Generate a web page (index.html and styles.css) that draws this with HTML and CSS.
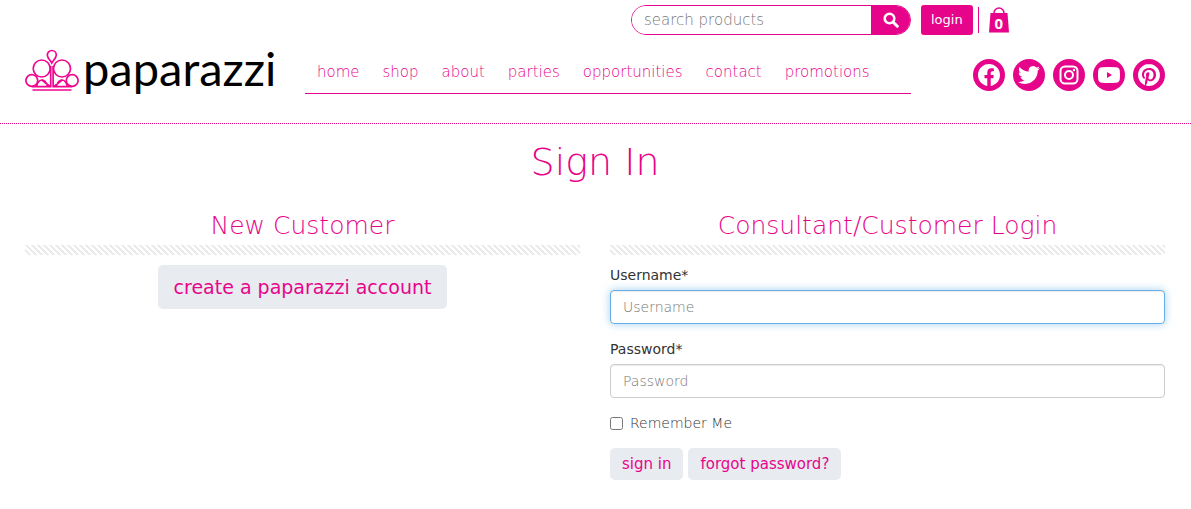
FILE: index.html
```html
<!DOCTYPE html>
<html lang="en">
<head>
	<meta charset="utf-8">
	<title>Sign In</title>
	<meta name="viewport" content="width=device-width, initial-scale=1">
	<link rel="stylesheet" href="styles.css">
</head>
<body>
	<header class="site-header">
		<div class="container header-grid">
			<div class="main-col search-row">
				<form class="search">
					<input type="text" placeholder="search products" aria-label="search products">
					<button type="submit" aria-label="search">
						<svg width="16" height="16" viewBox="0 0 16 16"><circle cx="6.5" cy="6.5" r="4.8" fill="none" stroke="#fff" stroke-width="2.6"/><path d="M10 10l4.3 4.3" stroke="#fff" stroke-width="3" stroke-linecap="round"/></svg>
					</button>
				</form>
			</div>
			<div class="side-col account">
				<button class="login" type="button">login</button>
				<a class="bag" href="#">
					<svg width="20" height="26" viewBox="0 0 20 26"><path d="M5 8V6a5 5 0 0 1 10 0V8" fill="none" stroke="#e6058a" stroke-width="1.5"/><path d="M1.500 6h17L20 25.500H0z" fill="#e6058a"/></svg>
					<span class="bag-count">0</span>
				</a>
			</div>
			<a class="logo" href="#">
				<svg width="54" height="44" viewBox="0 0 54 44" fill="none" stroke="#f1078f" stroke-width="1.7">
					<path d="M26.800 15C25 12 22.300 9.800 22.300 7a4.500 4.500 0 0 1 9 0C31.300 9.800 28.600 12 26.800 15z"/>
					<circle cx="16.700" cy="20.500" r="8.500"/>
					<circle cx="37" cy="20.500" r="8.500"/>
					<circle cx="6.800" cy="32.500" r="5.900"/>
					<circle cx="47.200" cy="32.500" r="5.900"/>
					<path d="M6.800 38.700H25.700V18"/>
					<path d="M47.200 38.700H28.100V18"/>
					<path d="M11.500 38.500c1-4 3-6.500 5.500-6.500s4.500 2.500 5.500 6.500M31.400 38.500c1-4 3-6.500 5.500-6.500s4.500 2.500 5.500 6.500M17 32l8 6.500M37 32l-8 6.500"/>
					<path d="M7.500 42h39"/>
				</svg>
				<span class="logo-text">paparazzi</span>
			</a>
			<nav class="main-col main-nav">
				<a href="#">home</a>
				<a href="#">shop</a>
				<a href="#">about</a>
				<a href="#">parties</a>
				<a href="#">opportunities</a>
				<a href="#">contact</a>
				<a href="#">promotions</a>
			</nav>
			<div class="side-col social">
				<a href="#" aria-label="Facebook"><svg width="22" height="22" viewBox="0 0 24 24"><path d="M24 12.073c0-6.627-5.373-12-12-12s-12 5.373-12 12c0 5.990 4.388 10.954 10.125 11.854v-8.385H7.078v-3.470h3.047V9.430c0-3.007 1.792-4.669 4.533-4.669 1.312 0 2.686.235 2.686.235v2.953H15.830c-1.491 0-1.956.925-1.956 1.874v2.250h3.328l-.532 3.470h-2.796v8.385C19.612 23.027 24 18.062 24 12.073z"/></svg></a>
				<a href="#" aria-label="Twitter"><svg width="22" height="22" viewBox="0 0 24 24"><path d="M23.953 4.570a10 10 0 01-2.825.775 4.958 4.958 0 002.163-2.723c-.951.555-2.005.959-3.127 1.184a4.920 4.920 0 00-8.384 4.482C7.690 8.095 4.067 6.130 1.640 3.162a4.822 4.822 0 00-.666 2.475c0 1.710.870 3.213 2.188 4.096a4.904 4.904 0 01-2.228-.616v.060a4.923 4.923 0 003.946 4.827 4.996 4.996 0 01-2.212.085 4.936 4.936 0 004.604 3.417 9.867 9.867 0 01-6.102 2.105c-.390 0-.779-.023-1.170-.067a13.995 13.995 0 007.557 2.209c9.053 0 13.998-7.496 13.998-13.985 0-.210 0-.420-.015-.630A9.935 9.935 0 0024 4.590z"/></svg></a>
				<a href="#" aria-label="Instagram"><svg width="20" height="20" viewBox="0 0 20 20"><rect x="1.500" y="1.500" width="17" height="17" rx="4.500" fill="none" stroke="#fff" stroke-width="2"/><circle cx="10" cy="10" r="4" fill="none" stroke="#fff" stroke-width="2"/><circle cx="15" cy="5" r="1.200"/></svg></a>
				<a href="#" aria-label="YouTube"><svg width="22" height="16" viewBox="0 0 22 16"><path fill-rule="evenodd" d="M4 .3Q11-.3 18 .3Q21.500.3 21.800 4Q22.200 8 21.800 12Q21.500 15.700 18 15.700Q11 16.300 4 15.700Q.5 15.700.2 12Q-.2 8 .2 4Q.5.3 4 .3zM9 5v6l5-3z"/></svg></a>
				<a href="#" aria-label="Pinterest"><svg width="22" height="22" viewBox="0 0 24 24"><path d="M12.017 0C5.396 0 .029 5.367.029 11.987c0 5.079 3.158 9.417 7.618 11.162-.105-.949-.199-2.403.041-3.439.219-.937 1.406-5.957 1.406-5.957s-.359-.720-.359-1.781c0-1.663.967-2.911 2.168-2.911 1.024 0 1.518.769 1.518 1.688 0 1.029-.653 2.567-.992 3.992-.285 1.193.600 2.165 1.775 2.165 2.128 0 3.768-2.245 3.768-5.487 0-2.861-2.063-4.869-5.008-4.869-3.410 0-5.409 2.562-5.409 5.199 0 1.033.394 2.143.889 2.741.099.120.112.225.085.345-.090.375-.293 1.199-.334 1.363-.053.225-.172.271-.401.165-1.495-.690-2.433-2.878-2.433-4.646 0-3.776 2.748-7.252 7.920-7.252 4.158 0 7.392 2.967 7.392 6.923 0 4.135-2.607 7.462-6.233 7.462-1.214 0-2.354-.629-2.758-1.379l-.749 2.848c-.269 1.045-1.004 2.352-1.498 3.146 1.123.345 2.306.535 3.550.535 6.607 0 11.985-5.365 11.985-11.987C23.970 5.390 18.592.026 11.985.026L12.017 0z"/></svg></a>
			</div>
		</div>
	</header>
	<main class="container">
		<h1>Sign In</h1>
		<div class="columns">
			<section class="new-customer">
				<h2>New Customer</h2>
				<div class="stripes"></div>
				<button class="btn btn-lg" type="button">create a paparazzi account</button>
			</section>
			<section>
				<h2>Consultant/Customer Login</h2>
				<div class="stripes"></div>
				<form class="login-form">
					<div class="form-group">
						<label for="username">Username*</label>
						<input class="form-control" type="text" id="username" placeholder="Username" autofocus>
					</div>
					<div class="form-group">
						<label for="password">Password*</label>
						<input class="form-control" type="password" id="password" placeholder="Password">
					</div>
					<label class="remember"><input type="checkbox"> Remember Me</label>
					<div class="buttons">
						<button class="btn" type="submit">sign in</button>
						<button class="btn" type="button">forgot password?</button>
					</div>
				</form>
			</section>
		</div>
	</main>
</body>
</html>
```
FILE: styles.css
```css
* {
	box-sizing: border-box;
}
body {
	margin: 0;
	font-family: "DejaVu Sans", sans-serif;
	font-weight: 200;
	font-size: 14px;
	line-height: 20px;
	color: #333;
	background: #fff;
}
input, button {
	font: inherit;
}
a {
	color: #e6058a;
	text-decoration: none;
}
.container {
	padding: 0 26px 0 25px;
}

/* header */
.site-header {
	border-bottom: 1px dotted #e6058a;
}
.header-grid {
	display: grid;
	grid-template-columns: 250px 1fr 254px;
	padding-top: 5px;
	padding-bottom: 29px;
}
.main-col {
	grid-column: 2;
	margin-left: 30px;
}
.side-col {
	grid-column: 3;
	padding-left: 10px;
}
.search-row {
	display: flex;
	justify-content: flex-end;
}
.search {
	display: flex;
	width: 280px;
	height: 30px;
	border: 1px solid #e6058a;
	border-radius: 15px;
	overflow: hidden;
}
.search input {
	flex: 1;
	min-width: 0;
	padding: 0 12px;
	border: 0;
	outline: 0;
	font-size: 15px;
}
.search button {
	width: 39px;
	padding: 0;
	border: 0;
	background: #e6058a;
}
.search svg {
	display: block;
	margin: 0 auto;
}
input::placeholder {
	color: #777;
	opacity: 1;
}
.account {
	display: flex;
	align-items: center;
}
.login {
	height: 30px;
	padding: 0 10px;
	border: 0;
	border-radius: 3px;
	font-size: 13px;
	font-weight: 400;
	color: #fff;
	background: #e6058a;
}
.bag {
	position: relative;
	margin-left: 5px;
	padding-left: 10px;
	height: 26px;
	border-left: 1px solid #e6058a;
}
.bag-count {
	position: absolute;
	left: 10px;
	bottom: 0;
	width: 20px;
	text-align: center;
	font-family: "Open Sans", sans-serif;
	font-size: 15px;
	font-weight: 700;
	color: #fff;
}
.logo {
	display: flex;
	grid-column: 1;
	height: 59px;
	padding-top: 13px;
}
.logo svg {
	flex: none;
}
.logo-text {
	margin-left: 4px;
	font-family: Lato, sans-serif;
	font-size: 47px;
	line-height: 40px;
	font-weight: 400;
	color: #000;
}
.main-nav {
	display: flex;
	align-items: flex-end;
	gap: 23px;
	padding: 0 12px 11px;
	border-bottom: 1px solid #e6058a;
	font-size: 15px;
}
.social {
	display: flex;
	justify-content: flex-end;
	align-items: flex-end;
	gap: 8px;
	padding-bottom: 3px;
}
.social a {
	display: flex;
	align-items: center;
	justify-content: center;
	width: 32px;
	height: 32px;
	border-radius: 50%;
	background: #e6058a;
}
.social svg {
	fill: #fff;
}

/* sign in */
h1, h2 {
	margin: 0;
	font-weight: 200;
	text-align: center;
	color: #e6058a;
}
h1 {
	padding-top: 18px;
	font-size: 38px;
	line-height: 40px;
}
h2 {
	font-size: 25px;
	line-height: 26px;
}
.columns {
	display: grid;
	grid-template-columns: 1fr 1fr;
	gap: 30px;
	margin-top: 31px;
}
.stripes {
	height: 10px;
	margin: 6px 0 10px;
	background: linear-gradient(45deg, #ebebeb 25%, #fff 25%, #fff 50%, #ebebeb 50%, #ebebeb 75%, #fff 75%) 0 0 / 6px 6px;
}
.new-customer {
	text-align: center;
}
.btn {
	height: 32px;
	padding: 0 12px;
	border: 0;
	border-radius: 5px;
	font-size: 15px;
	font-weight: 400;
	color: #e6058a;
	background: #e8ebf0;
}
.btn-lg {
	height: 44px;
	padding: 0 16px;
	font-size: 19px;
}
.form-group {
	margin-bottom: 15px;
}
.form-group label {
	display: block;
	margin-bottom: 5px;
	font-weight: 400;
}
.form-control {
	display: block;
	width: 100%;
	height: 34px;
	padding: 6px 12px;
	border: 1px solid #ccc;
	border-radius: 4px;
	box-shadow: inset 0 1px 1px rgba(0, 0, 0, .075);
}
.form-control:focus {
	border-color: #66afe9;
	outline: 0;
	box-shadow: inset 0 1px 1px rgba(0, 0, 0, .075), 0 0 8px rgba(102, 175, 233, .6);
}
.remember {
	display: flex;
	align-items: center;
	gap: 7px;
}
.remember input {
	width: 13px;
	height: 13px;
	margin: 0;
}
.buttons {
	display: flex;
	gap: 5px;
	margin-top: 15px;
}
```
